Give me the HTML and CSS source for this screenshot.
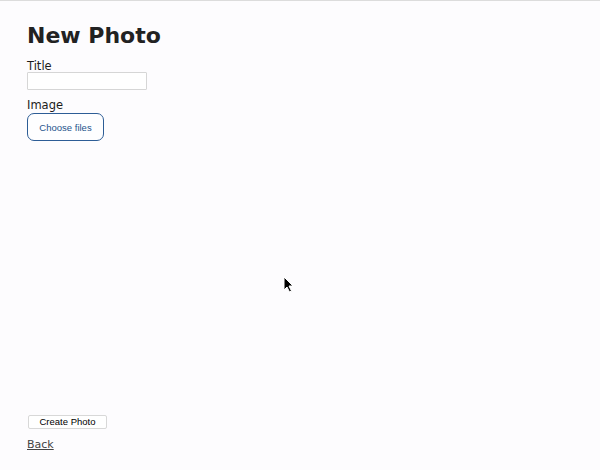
FILE: index.html
```html
<!DOCTYPE html>
<html>
<head>
<meta charset="utf-8">
<link rel="stylesheet" href="styles.css">
</head>
<body>
<div class="page">
  <h1 class="title">New Photo</h1>
  <form class="form">
    <div class="field">
      <label class="label">Title</label>
      <input class="text-input" type="text">
    </div>
    <div class="field">
      <label class="label">Image</label>
      <button type="button" class="file-btn">Choose files</button>
    </div>
    <div class="actions">
      <button type="button" class="submit-btn">Create Photo</button>
    </div>
  </form>
  <a class="back" href="#">Back</a>
</div>
<svg class="cursor" width="12" height="18" viewBox="0 0 12 18"><path d="M1 1 L1 14 L4 11 L6.5 16 L8.5 15 L6 10 L10 10 Z" fill="#000" stroke="#fff" stroke-width="1"/></svg>
</body>
</html>
```
FILE: styles.css
```css
html, body {
  margin: 0;
  padding: 0;
  background: #fdfcfe;
}
body {
  border-top: 1px solid #dcdcdc;
  height: 469px;
  font-family: "DejaVu Sans", Verdana, sans-serif;
  color: #222;
  position: relative;
}
.page {
  padding: 20px 0 0 27px;
}
.title {
  margin: 0 0 8px;
  font-size: 22px;
  line-height: 30px;
  font-weight: bold;
  color: #222;
}
.form {
  display: flex;
  flex-direction: column;
}
.field {
  display: flex;
  flex-direction: column;
  align-items: flex-start;
  margin-bottom: 8px;
}
.label {
  font-size: 11.5px;
  line-height: 12px;
  margin-top: 1px;
  color: #1c1c1c;
}
.text-input {
  box-sizing: border-box;
  width: 120px;
  height: 18px;
  margin: 0;
  border: 1px solid #d6d6d6;
  border-radius: 1px;
  background: #fff;
  padding: 0 3px;
}
.file-btn {
  box-sizing: border-box;
  width: 77px;
  height: 28px;
  margin: 2px 0 0;
  border: 1px solid #2d5d96;
  border-radius: 7px;
  background: #fefeff;
  color: #24538c;
  font-family: "Liberation Sans", Arial, sans-serif;
  font-size: 9.5px;
  padding: 0;
}
.actions {
  margin-top: 261px;
}
.submit-btn {
  box-sizing: border-box;
  width: 79px;
  height: 14px;
  margin: 0 0 0 1px;
  border: 1px solid #d8d8d8;
  border-radius: 2px;
  background: #fff;
  color: #000;
  font-family: "Liberation Sans", Arial, sans-serif;
  font-size: 9.5px;
  line-height: 12px;
  padding: 0;
}
.back {
  display: inline-block;
  margin-top: 9px;
  font-size: 11px;
  line-height: 13px;
  color: #444;
  text-decoration: underline;
}
.cursor {
  position: absolute;
  left: 283px;
  top: 275px;
}
```
